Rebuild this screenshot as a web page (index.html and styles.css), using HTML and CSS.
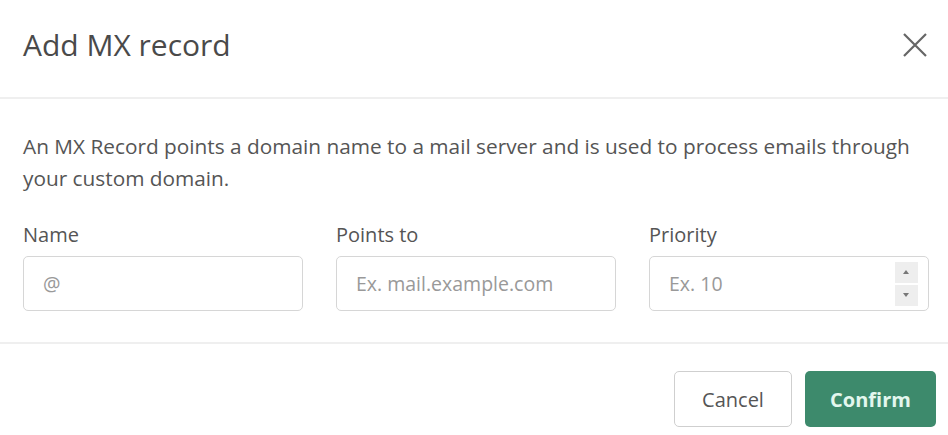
FILE: index.html
```html
<!DOCTYPE html>
<html lang="en">
<head>
  <meta charset="UTF-8">
  <title>Add MX record</title>
  <link rel="stylesheet" href="styles.css">
</head>
<body>

  <div class="modal">
    <div class="modal-header">
      <h2>Add MX record</h2>
      <button class="close-btn" aria-label="Close">
        <svg width="26" height="26" viewBox="0 0 26 26">
          <path d="M2 2 L24 24 M24 2 L2 24" stroke="#666" stroke-width="2.2" fill="none"/>
        </svg>
      </button>
    </div>

    <div class="modal-body">
      <p class="intro">An MX Record points a domain name to a mail server and is used to process emails through your custom domain.</p>

      <div class="fields">
        <div class="field">
          <label>Name</label>
          <div class="input"><span class="placeholder">@</span></div>
        </div>
        <div class="field">
          <label>Points to</label>
          <div class="input"><span class="placeholder">Ex. mail.example.com</span></div>
        </div>
        <div class="field">
          <label>Priority</label>
          <div class="input">
            <span class="placeholder">Ex. 10</span>
            <div class="spinner">
              <span class="spin up"></span>
              <span class="spin down"></span>
            </div>
          </div>
        </div>
      </div>
    </div>

    <div class="modal-footer">
      <button class="btn btn-cancel">Cancel</button>
      <button class="btn btn-confirm">Confirm</button>
    </div>
  </div>

</body>
</html>
```

FILE: styles.css
```css
* {
  box-sizing: border-box;
}

body {
  margin: 0;
  font-family: 'Open Sans', 'Noto Sans', sans-serif;
  background-color: #ffffff;
  color: #444;
}

.modal {
  width: 948px;
  height: 435px;
  background: white;
}

.modal-header {
  height: 99px;
  display: flex;
  justify-content: space-between;
  align-items: center;
  padding: 0 20px 8px 23px;
  border-bottom: 2px solid #efefef;
}

.modal-header h2 {
  margin: 0;
  font-size: 30px;
  line-height: 40px;
  font-weight: normal;
  color: #4a4a4a;
}

.close-btn {
  background: none;
  border: none;
  padding: 0;
  cursor: pointer;
  display: flex;
}

.modal-body {
  padding: 31px 19px 31px 23px;
  border-bottom: 2px solid #efefef;
}

.intro {
  margin: 0 0 27px 0;
  font-size: 20.8px;
  line-height: 32px;
  color: #555;
}

.fields {
  display: grid;
  grid-template-columns: 1fr 1fr 1fr;
  gap: 33px;
}

.field label {
  display: block;
  font-size: 20px;
  line-height: 28px;
  color: #555;
  margin-bottom: 7px;
}

.input {
  height: 55px;
  border: 1px solid #d6d6d6;
  border-radius: 5px;
  display: flex;
  align-items: center;
  justify-content: space-between;
  padding: 0 10px 0 19px;
}

.placeholder {
  font-size: 19.5px;
  color: #999;
}

.spinner {
  display: flex;
  flex-direction: column;
  gap: 2px;
}

.spin {
  width: 23px;
  height: 21px;
  background: #eeeeee;
  position: relative;
}

.spin::after {
  content: '';
  position: absolute;
  left: 8px;
  top: 8px;
  border-left: 3.5px solid transparent;
  border-right: 3.5px solid transparent;
}

.spin.up::after {
  border-bottom: 4px solid #777;
}

.spin.down::after {
  border-top: 4px solid #777;
}

.modal-footer {
  display: flex;
  justify-content: flex-end;
  gap: 13px;
  padding: 27px 12px 0 0;
}

.btn {
  height: 56px;
  font-family: 'Open Sans', sans-serif;
  font-size: 20px;
  border-radius: 5px;
  cursor: pointer;
}

.btn-cancel {
  width: 118px;
  background: white;
  border: 1px solid #cfcfcf;
  color: #555;
}

.btn-confirm {
  width: 131px;
  background-color: #3d8a6c;
  border: none;
  color: #e3f7ee;
  font-weight: bold;
}
```
